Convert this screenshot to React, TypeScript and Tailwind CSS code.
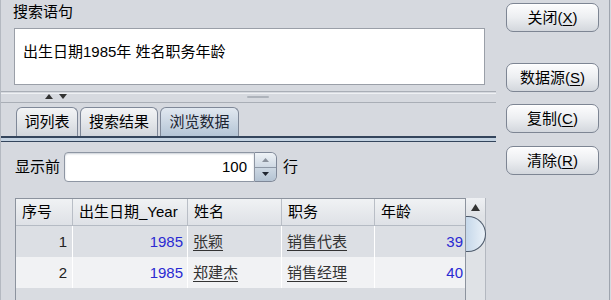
import React from 'react';

const font = { fontFamily: '"Liberation Sans", "Noto Sans CJK SC", sans-serif' };

function Mnemonic({ label, keyChar }: { label: string; keyChar: string }) {
  return (
    <span>
      {label}(<span className="underline underline-offset-2">{keyChar}</span>)
    </span>
  );
}

function SideButton({ label, keyChar, className = '' }: { label: string; keyChar: string; className?: string }) {
  return (
    <div
      className={`w-[93px] h-[29px] rounded-[7px] border border-[#7d8593] bg-gradient-to-b from-[#fdfdfe] via-[#eceef1] to-[#d3d7dd] shadow-[inset_0_1px_0_#ffffff] flex items-center justify-center text-[15px] leading-[20px] text-black ${className}`}
    >
      <Mnemonic label={label} keyChar={keyChar} />
    </div>
  );
}

function Tab({ label, width, active = false }: { label: string; width: string; active?: boolean }) {
  return (
    <div
      className={`${width} h-[29px] rounded-t-[6px] border border-b-0 border-[#7f8898] flex items-center justify-center text-[15px] leading-[20px] ${
        active
          ? 'bg-gradient-to-b from-[#e1e8f0] to-[#b5c5d6] text-[#1c2431]'
          : 'bg-gradient-to-b from-[#f3f4f6] via-[#e4e7ea] to-[#d2d6dc] text-black'
      }`}
    >
      {label}
    </div>
  );
}

const columns = [
  { title: '序号', width: 'w-[57px]' },
  { title: '出生日期_Year', width: 'w-[115px]' },
  { title: '姓名', width: 'w-[94px]' },
  { title: '职务', width: 'w-[93px]' },
  { title: '年龄', width: 'w-[89px]' },
];

const rows = [
  { no: 1, year: 1985, name: '张颖', title: '销售代表', age: 39 },
  { no: 2, year: 1985, name: '郑建杰', title: '销售经理', age: 40 },
];

export default function App() {
  return (
    <div className="w-[611px] h-[300px] bg-[#d6d9df] flex overflow-hidden pr-[1px]" style={font}>
      {/* left panel */}
      <div className="w-[496px] flex flex-col border-l border-[#b4b9c1]">
        <div className="h-[28px] pl-[12px] pt-[2px] text-[15px] leading-[20px] text-black">搜索语句</div>
        <div className="ml-[13px] w-[471px] h-[57px] border border-[#9a9fa8] bg-white pl-[8px] pt-[13px] text-[15px] leading-[20px] text-black">
          出生日期1985年 姓名职务年龄
        </div>

        {/* splitter */}
        <div className="mt-[6px] h-[12px] border-t border-b border-[#a9aeb6] flex items-center relative">
          <div className="absolute top-[1px] left-0 right-0 h-px bg-[#eef0f3]" />
          <svg width="24" height="6" viewBox="0 0 24 6" className="ml-[44px]">
            <path d="M0 5 L4 0 L8 5 Z" fill="#333" />
            <path d="M14 0 L22 0 L18 5 Z" fill="#333" />
          </svg>
          <div className="ml-[178px] w-[22px] h-[2px] bg-[#aeb3bb] rounded" />
        </div>

        {/* tabs */}
        <div className="mt-[3px] h-[30px] flex items-end pl-[15px] gap-[2px]">
          <Tab label="词列表" width="w-[62px]" />
          <Tab label="搜索结果" width="w-[78px]" />
          <Tab label="浏览数据" width="w-[79px]" active />
        </div>
        <div className="h-[6px] border-t-2 border-b border-[#34455c] bg-[#c3d2e1]" />

        {/* spinner row */}
        <div className="mt-[10px] h-[30px] flex items-center text-[15px] leading-[20px] text-black">
          <div className="w-[63px] pl-[14px]">显示前</div>
          <div className="w-[191px] h-[30px] border border-[#8e96a3] rounded-l-[4px] bg-white flex items-center justify-end pr-[7px] shadow-[inset_0_1px_2px_#c9ced6]">
            100
          </div>
          <div className="w-[22px] h-[30px] border border-l-0 border-[#7f8898] rounded-r-[6px] flex flex-col overflow-hidden">
            <div className="flex-1 bg-gradient-to-b from-[#eef2f6] to-[#cfd9e4] flex items-center justify-center border-b border-[#8e98a6]">
              <svg width="7" height="4" viewBox="0 0 7 4">
                <path d="M0 4 L3.5 0 L7 4 Z" fill="#8a919c" />
              </svg>
            </div>
            <div className="flex-1 bg-gradient-to-b from-[#cdd8e3] to-[#b4c3d3] flex items-center justify-center">
              <svg width="7" height="4" viewBox="0 0 7 4">
                <path d="M0 0 L7 0 L3.5 4 Z" fill="#1f2530" />
              </svg>
            </div>
          </div>
          <div className="ml-[6px]">行</div>
        </div>

        {/* table */}
        <div className="mt-[16px] ml-[14px] flex flex-1">
          <div className="w-[451px] border-l border-t border-r border-[#8c939e] bg-[#d9dce1] flex flex-col">
            <div className="h-[27px] flex bg-gradient-to-b from-[#f0f2f4] to-[#dee1e6] border-b border-[#b5bbc4]">
              {columns.map((c, i) => (
                <div
                  key={c.title}
                  className={`${c.width} h-full flex items-center pl-[6px] text-[15px] leading-[20px] text-black ${
                    i < columns.length - 1 ? 'border-r border-[#b9bec6]' : ''
                  }`}
                >
                  {c.title}
                </div>
              ))}
            </div>
            {rows.map((r, idx) => (
              <div
                key={r.no}
                className={`h-[31px] flex text-[15px] leading-[20px] ${idx === 0 ? 'bg-[#dcdfe4]' : 'bg-[#f1f2f4]'}`}
              >
                <div className="w-[57px] flex items-center justify-end pr-[5px] border-r border-white text-[#222]">{r.no}</div>
                <div className="w-[115px] flex items-center justify-end pr-[4px] border-r border-white text-[#2a2ad2]">{r.year}</div>
                <div className="w-[94px] flex items-center pl-[5px] border-r border-white text-[#333]">
                  <span className="underline underline-offset-[3px]">{r.name}</span>
                </div>
                <div className="w-[93px] flex items-center pl-[5px] border-r border-white text-[#333]">
                  <span className="underline underline-offset-[3px]">{r.title}</span>
                </div>
                <div className="w-[89px] flex items-center justify-end pr-[1px] text-[#2a2ad2]">{r.age}</div>
              </div>
            ))}
          </div>
          {/* scrollbar */}
          <div className="w-[20px] bg-[#dfe2e6] border-r border-[#b3b8c0] flex flex-col">
            <div className="h-[18px] flex items-center justify-center bg-gradient-to-b from-[#eef0f3] to-[#dfe2e6]">
              <svg width="9" height="7" viewBox="0 0 9 7">
                <path d="M0 7 L4.5 0 L9 7 Z" fill="#333" />
              </svg>
            </div>
            <div className="w-[20px] h-[36px] rounded-r-full border border-l-0 border-[#4d5a6b] bg-gradient-to-r from-[#c6d8ea] to-[#eaf1f8]" />
          </div>
        </div>
      </div>

      {/* right panel */}
      <div className="flex-1 flex flex-col pl-[10px] pt-[3px] border-r border-[#9ea4ae]">
        <SideButton label="关闭" keyChar="X" />
        <SideButton label="数据源" keyChar="S" className="mt-[31px]" />
        <SideButton label="复制" keyChar="C" className="mt-[12px]" />
        <SideButton label="清除" keyChar="R" className="mt-[13px]" />
      </div>
    </div>
  );
}
